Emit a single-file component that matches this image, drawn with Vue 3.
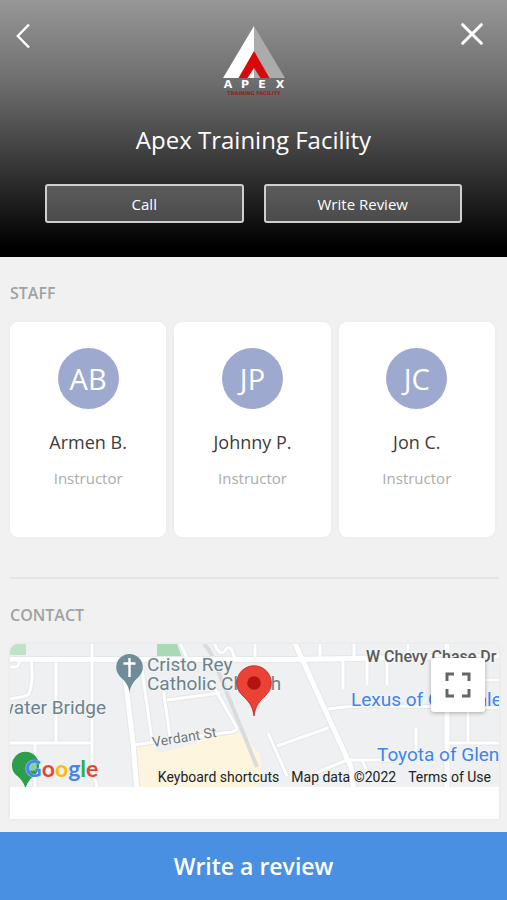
<template>
  <div class="page">
    <header class="hero">
      <div class="hero__bar">
        <button class="hero__nav" type="button" aria-label="Back">
          <svg width="14" height="26" viewBox="0 0 14 26" fill="none" stroke="currentColor" stroke-width="2.4">
            <polyline points="13 1.5 1.8 13 13 24.5" />
          </svg>
        </button>

        <svg class="hero__logo" width="62" height="70" viewBox="0 0 62 70" role="img" aria-label="Apex Training Facility logo">
          <polygon points="31 0 0 52 31 52" fill="#fff" />
          <polygon points="31 0 62 52 31 52" fill="#ababab" />
          <polygon points="31 25 15.5 52 24.5 52 31 42 37.5 52 46.5 52" fill="#d8080c" />
          <text
            v-for="mark in logoLetters"
            :key="mark.letter"
            class="logo-letter"
            :x="mark.x"
            y="62"
          >{{ mark.letter }}</text>
          <text class="logo-tagline" x="31" y="69">TRAINING FACILITY</text>
        </svg>

        <button class="hero__nav hero__nav--close" type="button" aria-label="Close">
          <svg width="22" height="22" viewBox="0 0 22 22" fill="none" stroke="currentColor" stroke-width="3" stroke-linecap="round">
            <line x1="1.7" y1="1.7" x2="20.3" y2="20.3" />
            <line x1="20.3" y1="1.7" x2="1.7" y2="20.3" />
          </svg>
        </button>
      </div>

      <h1 class="hero__title">Apex Training Facility</h1>

      <div class="hero__actions">
        <button class="hero__action" type="button">Call</button>
        <button class="hero__action" type="button">Write Review</button>
      </div>
    </header>

    <main class="content">
      <section class="section">
        <h2 class="section__title">STAFF</h2>
        <ul class="staff">
          <li v-for="person in staff" :key="person.name" class="staff__card">
            <div class="staff__avatar" aria-hidden="true">{{ person.initials }}</div>
            <div class="staff__name">{{ person.name }}</div>
            <div class="staff__role">{{ person.role }}</div>
          </li>
        </ul>
      </section>

      <section class="section section--ruled">
        <h2 class="section__title">CONTACT</h2>
        <div class="contact">
          <div class="map">
            <svg class="map__canvas" viewBox="0 0 489 143" preserveAspectRatio="xMidYMid slice">
              <rect width="489" height="143" fill="#eef0f1" />

              <!-- Parks and the school grounds -->
              <path d="M0 0h16v11H0z" fill="#bfe3c8" />
              <path d="M147 0h20l5 13h-25z" fill="#a8dab5" />
              <path d="M119 103l7-2 104-13 20 22 2 20-4 13H127z" fill="#fdf5de" />
              <path d="M143 98l44-7v9l-39 9z" fill="#eef0f1" />

              <path d="M194 0q8 8 12 22l41 101" class="map__rail" />

              <g v-for="layer in ['casing', 'road']" :key="layer" :class="'map__' + layer">
                <path v-for="d in minorRoads" :key="d" :d="d" />
                <path v-for="d in mainRoads" :key="d" :d="d" class="map__main" />
              </g>

              <g class="map__place">
                <text x="137" y="27">Cristo Rey</text>
                <text x="137" y="46">Catholic Church</text>
                <text x="96" y="70" text-anchor="end">Clearwater Bridge</text>
              </g>
              <text class="map__street" transform="translate(143 103) rotate(-9)">Verdant St</text>
              <text class="map__avenue" x="356" y="18">W Chevy Chase Dr</text>
              <g class="map__shop">
                <text x="341" y="62">Lexus of Glendale</text>
                <text x="367" y="117">Toyota of Glendale</text>
              </g>

              <!-- Church -->
              <path d="M119.500 48.500C118.500 41 114 36 110 32.500a13.300 13.300 0 1 1 19 0C125 36 120.500 41 119.500 48.500z" fill="#6f8d98" />
              <path d="M119.500 14v19M113.500 19.500h12" fill="none" stroke="#fff" stroke-width="2.400" />

              <!-- Selected location -->
              <path
                d="M244 72C242.500 61 238 57 232 51c-4-4-5.300-8-5.300-12a17.300 17.300 0 0 1 34.600 0c0 4-1.300 8-5.300 12-6 6-10.500 10-12 21z"
                fill="#ea4335"
                stroke="#c5221f"
                stroke-width="0.800"
              />
              <circle cx="244" cy="39" r="6.800" fill="#b31412" />

              <!-- Park marker under the wordmark -->
              <path d="M15.500 145C14.500 139 10 134 6 131a13.600 13.600 0 1 1 19 0C21 134 16.500 139 15.500 145z" fill="#2d9d4c" />
              <circle cx="22" cy="122" r="5" fill="#8ccf9b" />
            </svg>

            <a class="map__google" href="#" aria-label="Google">
              <span
                v-for="(glyph, idx) in googleLetters"
                :key="idx"
                :class="'map__google--' + glyph.color"
              >{{ glyph.letter }}</span>
            </a>

            <button class="map__fullscreen" type="button" aria-label="Toggle fullscreen view">
              <svg width="26" height="26" viewBox="0 0 26 26" fill="none" stroke="#666" stroke-width="3">
                <path d="M2 9V2h7M17 2h7v7M24 17v7h-7M9 24H2v-7" />
              </svg>
            </button>

            <div class="map__legal">
              <button type="button">Keyboard shortcuts</button>
              <span>Map data ©2022</span>
              <a href="#">Terms of Use</a>
            </div>
          </div>
        </div>
      </section>
    </main>

    <button class="review-button" type="button">Write a review</button>
  </div>
</template>

<script setup>
import { ref } from 'vue'

const staff = ref([
  { initials: 'AB', name: 'Armen B.', role: 'Instructor' },
  { initials: 'JP', name: 'Johnny P.', role: 'Instructor' },
  { initials: 'JC', name: 'Jon C.', role: 'Instructor' }
])

const logoLetters = [
  { letter: 'A', x: 5 },
  { letter: 'P', x: 22 },
  { letter: 'E', x: 39 },
  { letter: 'X', x: 57 }
]

const googleLetters = [
  { letter: 'G', color: 'blue' },
  { letter: 'o', color: 'red' },
  { letter: 'o', color: 'yellow' },
  { letter: 'g', color: 'blue' },
  { letter: 'l', color: 'green' },
  { letter: 'e', color: 'red' }
]

const mainRoads = [
  'M-5 15.500H285L489 12',
  'M283 -5L341 123L344 148',
  'M437 -5V148',
  'M113 15L123 99L127 148'
]

const minorRoads = [
  'M82 -5V118Q83 132 89 148',
  'M46 15V99',
  'M21 15Q24 36 19 50Q14 54 -5 55',
  'M-5 23H6Q10 22 9 15',
  'M-5 99H82',
  'M25 99V148',
  'M132 26L142 97',
  'M168 -5L178 16',
  'M153 44L160 93',
  'M157 56L210 49',
  'M200 36L227 84Q227 87 221 88L123 101',
  'M203 -5Q208 12 214 8Q220 -2 223 10L226 16',
  'M245 -5V14',
  'M258 89L277 132',
  'M267 102L318 84',
  'M318 65Q350 60 385 62L489 64',
  'M310 -5V14',
  'M344 -5V14',
  'M398 -5V12',
  'M333 14V45',
  'M357 14V41',
  'M377 14V41',
  'M475 36H495',
  'M458 64V99',
  'M437 99H495',
  'M406 84V112',
  'M305 129L337 116H385',
  'M352 116L360 134'
]
</script>

<style>
body {
  margin: 0;
  background: #f1f1f1;
}
</style>

<style scoped>
.page {
  display: flex;
  flex-direction: column;
  min-height: 100vh;
  background: #f1f1f1;
  font-family: 'Open Sans', 'Noto Sans', sans-serif;
  color: #3c3c3c;
}

button {
  border: none;
  background: none;
  padding: 0;
  font: inherit;
  color: inherit;
  cursor: pointer;
}

/* Header */
.hero {
  padding: 23px 0 34px;
  background: linear-gradient(#979797 0%, #6c6c6c 33%, #424242 58%, #1c1c1c 80%, #000 96%);
  color: #fff;
}

.hero__bar {
  display: flex;
  justify-content: space-between;
  align-items: flex-start;
  padding: 0 16px;
}

.hero__nav {
  display: flex;
  width: 38px;
}

.hero__nav--close {
  justify-content: center;
}

.hero__logo {
  margin-top: 3px;
}

.logo-letter {
  font: bold 11px 'DejaVu Sans', sans-serif;
  fill: #fff;
  text-anchor: middle;
}

.logo-tagline {
  font: bold 5px 'DejaVu Sans', sans-serif;
  fill: #a3161b;
  text-anchor: middle;
}

.hero__title {
  margin: 28px 0;
  font-size: 24px;
  line-height: 32px;
  font-weight: 400;
  text-align: center;
}

.hero__actions {
  display: flex;
  gap: 20px;
  padding: 0 45px;
}

.hero__action {
  flex: 1;
  height: 39px;
  border: 2px solid #cfcfcf;
  border-radius: 3px;
  background: linear-gradient(#5b5b5b, #4b4b4b);
  font-size: 15px;
}

/* Sections */
.content {
  flex: 1;
  padding-bottom: 13px;
}

.section {
  padding: 24px 8px 0 10px;
}

.section--ruled::before {
  content: '';
  display: block;
  height: 2px;
  margin: 16px 0 24px;
  background: #e4e4e4;
}

.section__title {
  margin: 0 0 17px;
  font-size: 16px;
  line-height: 24px;
  font-weight: 600;
  color: #a0a2a2;
}

.staff {
  display: flex;
  gap: 8px;
  margin: 0;
  padding: 0 4px 0 0;
  list-style: none;
}

.staff__card {
  flex: 1;
  display: flex;
  flex-direction: column;
  align-items: center;
  padding: 26px 0 49px;
  border-radius: 8px;
  background: #fff;
  box-shadow: 0 0 4px rgba(0, 0, 0, 0.04);
}

.staff__avatar {
  display: flex;
  align-items: center;
  justify-content: center;
  width: 61px;
  height: 61px;
  border-radius: 50%;
  background: #9ea9cf;
  color: #fff;
  font-size: 29px;
}

.staff__name {
  margin: 21px 0 14px;
  font-size: 18px;
  line-height: 24px;
}

.staff__role {
  font-size: 15px;
  line-height: 20px;
  color: #a9acac;
}

/* Contact map */
.contact {
  padding-bottom: 32px;
  border-radius: 8px 8px 0 0;
  background: #fff;
  box-shadow: 0 0 4px rgba(0, 0, 0, 0.06);
}

.map {
  position: relative;
  height: 143px;
  overflow: hidden;
  border-radius: 8px 8px 0 0;
  font-family: Roboto, sans-serif;
}

.map__canvas {
  display: block;
  width: 100%;
  height: 100%;
}

.map__rail {
  fill: none;
  stroke: #d9dbdd;
  stroke-width: 4;
}

.map__casing path,
.map__road path {
  fill: none;
  stroke-linejoin: round;
}

.map__casing path {
  stroke: #e4e6e8;
  stroke-width: 5;
}

.map__casing .map__main {
  stroke-width: 7;
}

.map__road path {
  stroke: #fff;
  stroke-width: 3;
}

.map__road .map__main {
  stroke-width: 5;
}

.map__canvas text {
  stroke: #f4f5f6;
  stroke-width: 2;
  stroke-linejoin: round;
  paint-order: stroke;
}

.map__place {
  font-size: 19px;
  fill: #6c828c;
}

.map__street {
  font-size: 14px;
  fill: #757575;
}

.map__avenue {
  font-size: 16px;
  font-weight: 500;
  fill: #5a5a5a;
}

.map__shop {
  font-size: 19px;
  fill: #3f83ec;
}

.map__google {
  position: absolute;
  left: 15px;
  bottom: 5px;
  display: flex;
  font-family: Lato, sans-serif;
  font-size: 23px;
  font-weight: 700;
  line-height: 28px;
  text-decoration: none;
  text-shadow: 0 0 1px #fff;
}

.map__google--blue {
  color: #4285f4;
}

.map__google--red {
  color: #ea4335;
}

.map__google--yellow {
  color: #fbbc05;
}

.map__google--green {
  color: #34a853;
}

.map__fullscreen {
  position: absolute;
  top: 14px;
  right: 14px;
  display: flex;
  align-items: center;
  justify-content: center;
  width: 54px;
  height: 54px;
  border-radius: 3px;
  background: #fff;
  box-shadow: 0 1px 4px rgba(0, 0, 0, 0.3);
}

.map__legal {
  position: absolute;
  right: 8px;
  bottom: 0;
  display: flex;
  gap: 12px;
  font-size: 14px;
  line-height: 20px;
  color: #222;
}

.map__legal a {
  color: inherit;
  text-decoration: none;
}

/* Bottom call to action */
.review-button {
  position: sticky;
  bottom: 0;
  height: 68px;
  background: #4a90e2;
  color: #fff;
  font-size: 23px;
  font-weight: 600;
}
</style>
